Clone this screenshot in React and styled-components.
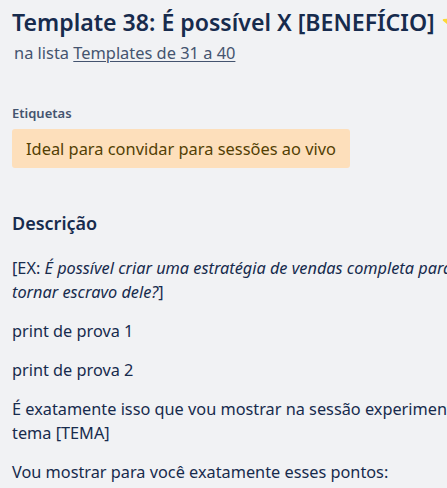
import React from 'react'
import styled, { createGlobalStyle } from 'styled-components'

const Global = createGlobalStyle`
  html, body {
    margin: 0;
    padding: 0;
    background: #f1f2f4;
    overflow: hidden;
  }
  body {
    font-family: 'Noto Sans', 'Open Sans', sans-serif;
    color: #172b4d;
  }
`

const Page = styled.div`
  width: 620px;
  padding: 0 12px;
`

const Title = styled.h1`
  margin: 0;
  padding-top: 5px;
  font-size: 23.1px;
  line-height: 34px;
  font-weight: 600;
  color: #172b4d;
  white-space: nowrap;
`

const ListLine = styled.div`
  margin: 2px 0 0 2px;
  font-size: 16.4px;
  line-height: 24px;
  color: #44546f;

  a {
    color: #44546f;
    text-decoration: underline;
    text-underline-offset: 2px;
  }
`

const Section = styled.section`
  margin-top: ${p => p.$top || 0}px;
`

const SmallHeading = styled.h3`
  margin: 0 0 8px;
  font-size: 13px;
  line-height: 16px;
  font-weight: 600;
  color: #44546f;
`

const Label = styled.span`
  display: inline-block;
  background: #fddfbb;
  color: #533f04;
  border-radius: 3px;
  padding: 0 14px;
  font-size: 16.4px;
  line-height: 39px;
`

const Heading = styled.h2`
  margin: 0 0 21px;
  font-size: 18px;
  line-height: 24px;
  font-weight: 600;
  color: #172b4d;
`

const Para = styled.p`
  margin: 0 0 15px;
  font-size: 16.3px;
  line-height: 24px;
  color: #172b4d;
`

export default function App() {
  return (
    <>
      <Global />
      <Page>
        <Title>Template 38: É possível X [BENEFÍCIO] ⭐</Title>
        <ListLine>
          na lista <a href="#">Templates de 31 a 40</a>
        </ListLine>

        <Section $top={40}>
          <SmallHeading>Etiquetas</SmallHeading>
          <Label>Ideal para convidar para sessões ao vivo</Label>
        </Section>

        <Section $top={43}>
          <Heading>Descrição</Heading>
          <Para>
            [EX: <em>É possível criar uma estratégia de vendas completa para o seu negócio sem se<br />tornar escravo dele?</em>]
          </Para>
          <Para>print de prova 1</Para>
          <Para>print de prova 2</Para>
          <Para>É exatamente isso que vou mostrar na sessão experimental sobre o<br />tema [TEMA]</Para>
          <Para>Vou mostrar para você exatamente esses pontos:</Para>
        </Section>
      </Page>
    </>
  )
}
